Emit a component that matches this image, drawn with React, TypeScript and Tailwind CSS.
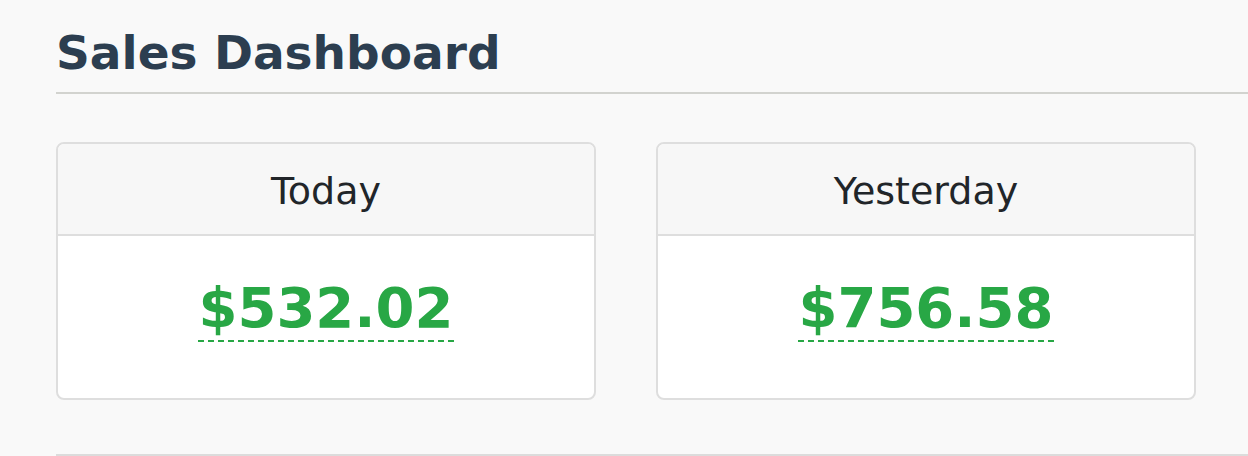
import React from 'react';

const STATS = [
  { label: 'Today', amount: '$532.02' },
  { label: 'Yesterday', amount: '$756.58' },
];

export default function App() {
  return (
    <div className="min-h-screen bg-[#f9f9f9] pl-[56px] pt-[25px] font-['DejaVu_Sans',sans-serif] overflow-hidden">
      <h1 className="text-[47px] leading-[55px] font-bold text-[#2c3e50] pb-[12px] border-b-2 border-[#d2d3cf]">
        Sales Dashboard
      </h1>

      <div className="w-[1140px] grid grid-cols-2 gap-[60px] mt-[48px]">
        {STATS.map((s) => (
          <StatCard key={s.label} label={s.label} amount={s.amount} />
        ))}
      </div>

      <div className="mt-[54px] border-t-2 border-[#dcdcdc]"></div>
    </div>
  );
}

const StatCard = ({ label, amount }: { label: string; amount: string }) => (
  <div className="bg-white border-2 border-[#dedede] rounded-lg overflow-hidden">
    <div className="h-[92px] flex items-center justify-center bg-[#f7f7f7] border-b-2 border-[#dedede]">
      <span className="text-[38px] leading-[44px] text-[#212529] pt-[3px]">{label}</span>
    </div>
    <div className="h-[162px] pt-[39px] text-center text-[56px] leading-[66px] font-bold text-[#28a745]">
      <span className="border-b-2 border-dashed border-[#28a745]">{amount}</span>
    </div>
  </div>
);
